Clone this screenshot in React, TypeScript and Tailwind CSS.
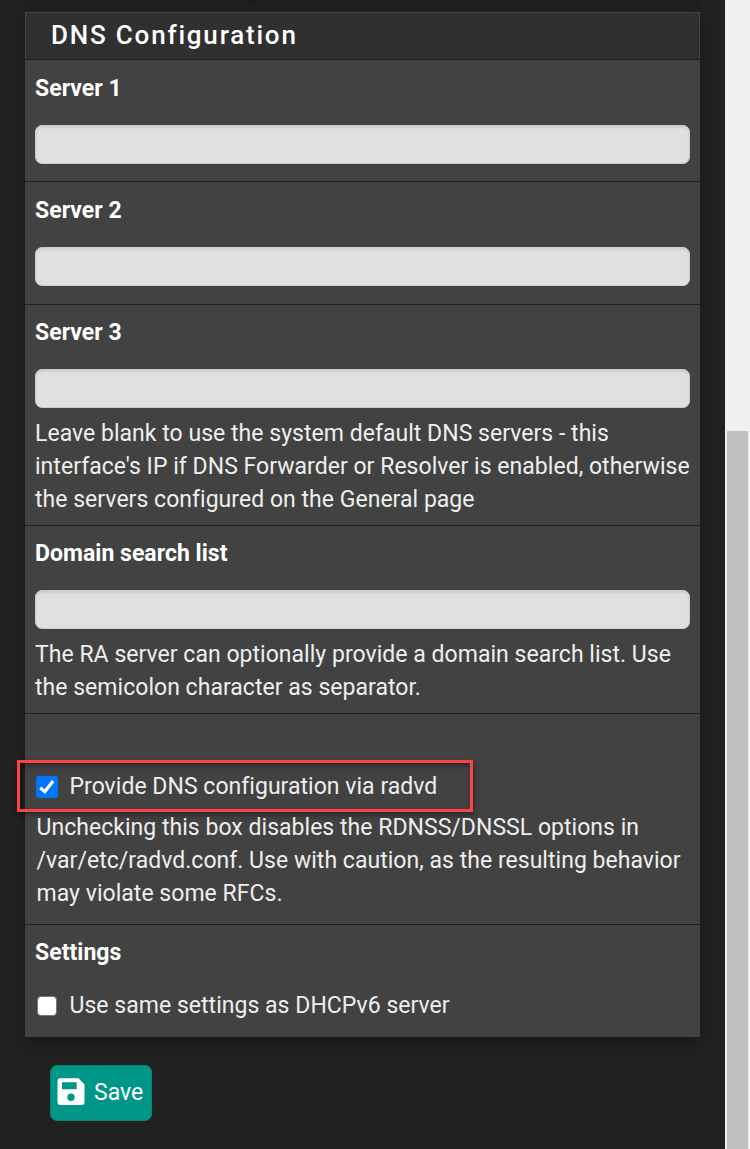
import type { ReactNode } from 'react';

function Field({ label, className, children }: { label: string; className: string; children?: ReactNode }) {
  return (
    <div className={`border-b border-[#212121] px-[10px] ${className}`}>
      <label className="block text-[23px] leading-[33px] font-bold text-white">
        {label}
        <input
          type="text"
          className="mt-5 block h-[39px] w-full rounded-[7px] border border-[#cccccc] bg-[#e0e0e0] px-3 font-normal text-black shadow-[inset_0_2px_2px_rgba(0,0,0,0.075)] outline-none"
        />
      </label>
      {children}
    </div>
  );
}

function Help({ lines, className }: { lines: string[]; className: string }) {
  return (
    <p className={`whitespace-nowrap ${className}`}>
      {lines.map((line) => (
        <span key={line} className="block">
          {line}
        </span>
      ))}
    </p>
  );
}

export default function App() {
  return (
    <div className="flex h-[1149px] w-[750px] overflow-hidden bg-[#212121] text-[23px] leading-[33px] tracking-[0.03px] text-[#eeeeee] font-[Roboto,'Liberation_Sans',sans-serif]">
      <main className="flex w-[725px] flex-col items-start pl-[25px]">
        <div className="h-3 w-[675px] shrink-0 bg-linear-to-b from-[#1c1c1c] to-[#212121]" />
        <section className="w-[675px] shrink-0 bg-[#424242] shadow-[0_8px_12px_-2px_rgba(0,0,0,0.3)]">
          <h2 className="h-12 border border-[#424242] border-b-[#212121] bg-[#303030] pl-[25px] text-[26px] leading-[45px] font-medium tracking-[1.8px] text-white">
            DNS Configuration
          </h2>
          <Field label="Server 1" className="h-[122px] pt-3" />
          <Field label="Server 2" className="h-[123px] pt-3" />
          <Field label="Server 3" className="h-[221px] pt-[11px]">
            <Help
              className="mt-[9px]"
              lines={[
                'Leave blank to use the system default DNS servers - this',
                "interface's IP if DNS Forwarder or Resolver is enabled, otherwise",
                'the servers configured on the General page',
              ]}
            />
          </Field>
          <Field label="Domain search list" className="h-[188px] pt-[11px]">
            <Help
              className="mt-[9px]"
              lines={[
                'The RA server can optionally provide a domain search list. Use',
                'the semicolon character as separator.',
              ]}
            />
          </Field>
          <div className="relative h-[211px] border-b border-[#212121] pt-14 pl-[11px]">
            <label className="flex items-center">
              <span className="flex size-[22px] items-center justify-center rounded-[3px] bg-[#0075ff]">
                <svg viewBox="0 0 22 22" className="size-[22px]" fill="none" stroke="#fff" strokeWidth="3.2">
                  <path d="M4.3 11.7 8.8 15.6 17.1 5.1" />
                </svg>
              </span>
              <span className="ml-[11.5px]">Provide DNS configuration via radvd</span>
            </label>
            <Help
              className="mt-2 pl-[0.5px]"
              lines={[
                'Unchecking this box disables the RDNSS/DNSSL options in',
                '/var/etc/radvd.conf. Use with caution, as the resulting behavior',
                'may violate some RFCs.',
              ]}
            />
            <div className="pointer-events-none absolute top-[46px] -left-2 h-[52px] w-[456px] border-3 border-[#fb4344] shadow-[1px_3px_5px_rgba(0,0,0,0.4),inset_1px_3px_5px_rgba(0,0,0,0.4)]" />
          </div>
          <div className="h-[112px] pt-[11px] pl-[10px]">
            <div className="font-bold text-white">Settings</div>
            <label className="mt-5 flex items-center pl-[2px]">
              <span className="size-5 rounded-[4px] border-[1.5px] border-[#767676] bg-white" />
              <span className="ml-[12.5px]">Use same settings as DHCPv6 server</span>
            </label>
          </div>
        </section>
        <button className="mt-7 ml-[25px] flex h-14 w-[102px] shrink-0 items-center rounded-[7px] border border-[#008577] bg-[#009688] pb-px pl-[6px] text-white">
          <svg viewBox="0 0 28 28" className="-mt-px size-7" fill="#fff">
            <path
              fillRule="evenodd"
              d="M3.5 0.3H21.5L27.5 6.5V24Q27.5 27 24.5 27H3.5Q0.5 27 0.5 24V3.3Q0.5 0.3 3.5 0.3ZM5 4.3V11.3H19.7V4.3ZM14 15.6A3.7 3.7 0 1 0 14 23A3.7 3.7 0 1 0 14 15.6Z"
            />
          </svg>
          <span className="ml-[9px]">Save</span>
        </button>
      </main>
      <aside className="flex w-[25px] flex-col bg-[#f0f0f0] pt-[431px] pl-[2px]">
        <div className="w-[21px] flex-1 bg-[#c1c1c1]" />
      </aside>
    </div>
  );
}
